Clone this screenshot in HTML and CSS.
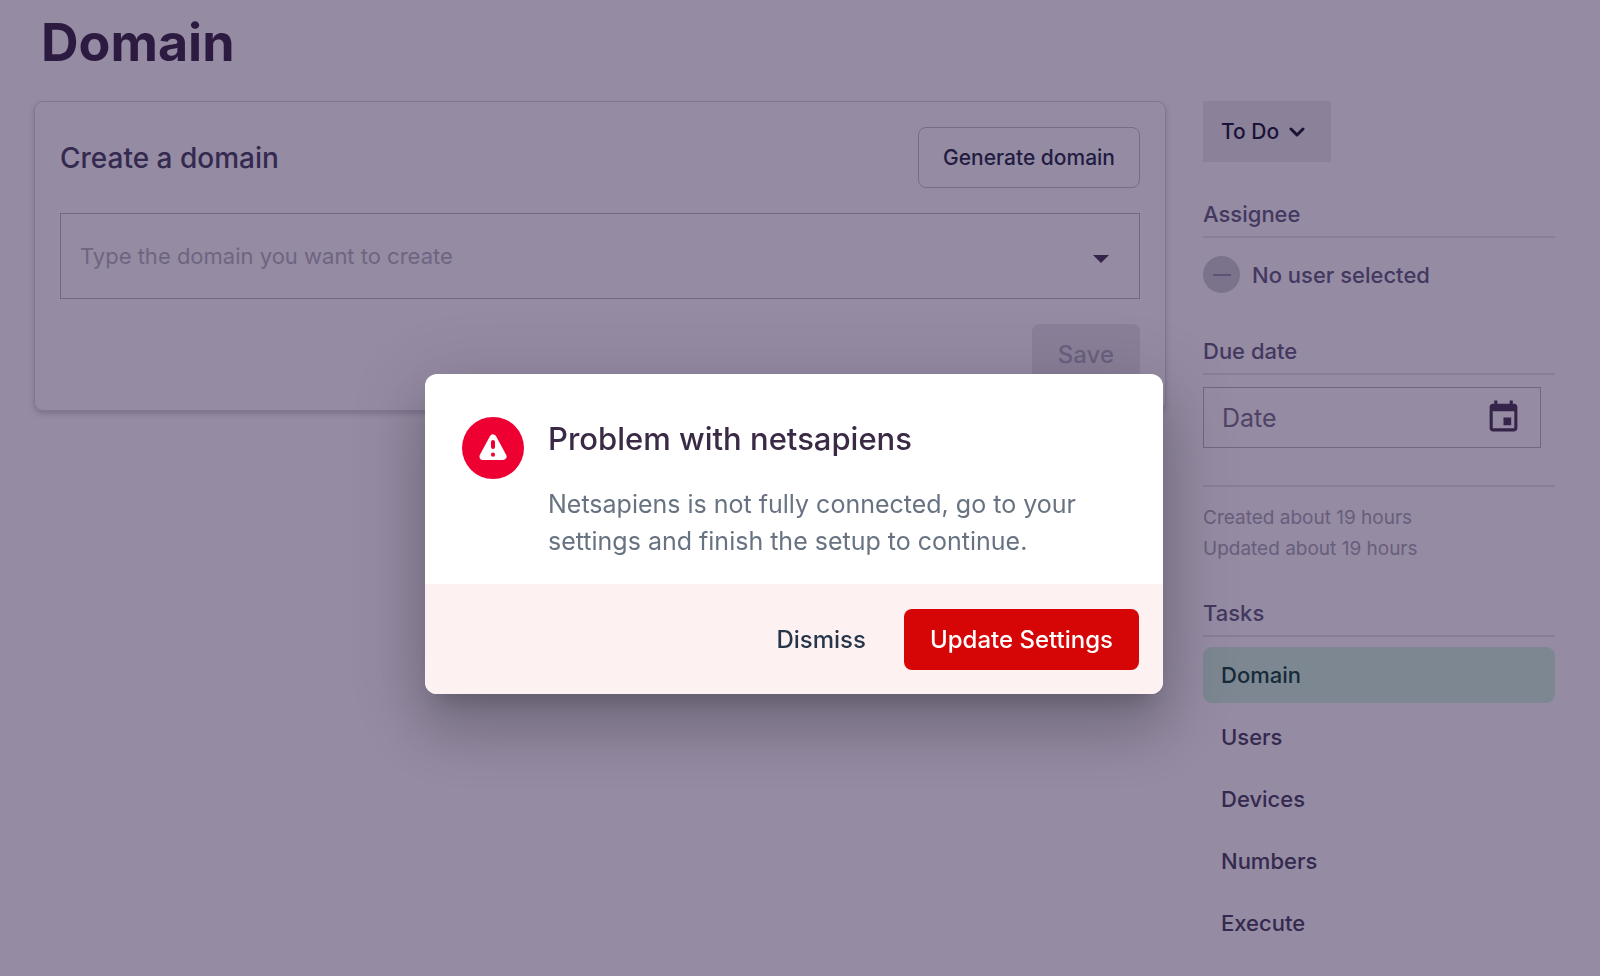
FILE: index.html
```html
<!DOCTYPE html>
<html lang="en">
<head>
<meta charset="utf-8">
<title>Domain</title>
<meta name="viewport" content="width=device-width, initial-scale=1">
<link rel="stylesheet" href="styles.css">
</head>
<body>
<div class="page">
  <h1 class="page-title">Domain</h1>
  <div class="columns">
    <main class="card">
      <div class="card-head">
        <h2 class="card-title"><label for="domain">Create a domain</label></h2>
        <button class="btn btn-outline" type="button">Generate domain</button>
      </div>
      <div class="combo">
        <input class="combo-input" id="domain" type="text" placeholder="Type the domain you want to create">
        <button class="icon-btn" type="button" aria-label="Show domains">
          <svg width="16" height="8" viewBox="0 0 16 8" aria-hidden="true"><path d="M0 0h16L8 8z" fill="currentColor"/></svg>
        </button>
      </div>
      <div class="card-foot">
        <button class="btn btn-save" type="button" disabled>Save</button>
      </div>
    </main>

    <aside class="sidebar">
      <div class="status">
        <select class="status-select" aria-label="Status"><option>To Do</option></select>
        <svg class="status-arrow" width="16" height="10" viewBox="0 0 16 10" fill="none" stroke="currentColor" stroke-width="3" stroke-linecap="round" stroke-linejoin="round" aria-hidden="true"><path d="M2 2l6 6 6-6"/></svg>
      </div>

      <section class="group">
        <h3 class="group-title">Assignee</h3>
        <div class="assignee">
          <span class="avatar"><svg width="18" height="2" viewBox="0 0 18 2" aria-hidden="true"><path d="M0 0h18v2H0z" fill="currentColor"/></svg></span>
          <span>No user selected</span>
        </div>
      </section>

      <section class="group">
        <h3 class="group-title"><label for="due">Due date</label></h3>
        <div class="date">
          <input class="date-input" id="due" type="text" placeholder="Date">
          <button class="icon-btn" type="button" aria-label="Choose date">
            <svg width="37" height="37" viewBox="0 0 24 24" aria-hidden="true"><path d="M17 12h-5v5h5v-5zM16 1v2H8V1H6v2H5c-1.110 0-1.990.9-1.990 2L3 19c0 1.100.890 2 2 2h14c1.100 0 2-.9 2-2V5c0-1.100-.9-2-2-2h-1V1h-2zm3 18H5V8h14v11z" fill="currentColor"/></svg>
          </button>
        </div>
      </section>

      <div class="meta">
        <p class="meta-line">Created about 19 hours</p>
        <p class="meta-line">Updated about 19 hours</p>
      </div>

      <nav class="group" aria-labelledby="tasks">
        <h3 class="group-title" id="tasks">Tasks</h3>
        <ul class="tasks">
          <li><a class="task task-active" href="#domain" aria-current="page">Domain</a></li>
          <li><a class="task" href="#users">Users</a></li>
          <li><a class="task" href="#devices">Devices</a></li>
          <li><a class="task" href="#numbers">Numbers</a></li>
          <li><a class="task" href="#execute">Execute</a></li>
        </ul>
      </nav>
    </aside>
  </div>
</div>

<div class="overlay">
  <div class="dialog" role="alertdialog" aria-modal="true" aria-labelledby="dialog-title" aria-describedby="dialog-text">
    <div class="dialog-body">
      <span class="dialog-icon">
        <svg width="30" height="28" viewBox="0 0 30 28" aria-hidden="true">
          <path d="M15 4L25 22.500H5z" fill="#fff" stroke="#fff" stroke-width="7" stroke-linejoin="round"/>
          <path d="M15 8v5M15 20.600v.1" stroke="#ee0033" stroke-width="4" stroke-linecap="round"/>
        </svg>
      </span>
      <div class="dialog-copy">
        <h2 class="dialog-title" id="dialog-title">Problem with netsapiens</h2>
        <p class="dialog-text" id="dialog-text">Netsapiens is not fully connected, go to your settings and finish the setup to continue.</p>
      </div>
    </div>
    <div class="dialog-actions">
      <button class="btn btn-plain" type="button">Dismiss</button>
      <button class="btn btn-danger" type="button">Update Settings</button>
    </div>
  </div>
</div>
</body>
</html>
```
FILE: styles.css
```css
* { box-sizing: border-box; }

body {
  margin: 0;
  background: #958ba3;
  color: #34294f;
  font-family: Inter, "Liberation Sans", sans-serif;
  font-size: 22px;
  line-height: 32px;
}

h1, h2, h3, p, ul { margin: 0; padding: 0; }
ul { list-style: none; }
button, input, select { font: inherit; color: inherit; }
button { cursor: pointer; }

.page { padding: 11px 45px 24px 34px; }

.page-title {
  padding-left: 7px;
  margin-bottom: 26px;
  color: #2c1a40;
  font-size: 52px;
  font-weight: 700;
  line-height: 64px;
}

.columns {
  display: grid;
  grid-template-columns: minmax(0, 1fr) 352px;
  gap: 37px;
  align-items: start;
}

.card {
  display: flex;
  flex-direction: column;
  gap: 25px;
  padding: 25px;
  border: 1px solid #81778f;
  border-radius: 9px;
  box-shadow: 0 3px 5px rgba(60, 45, 80, .25);
}

.card-head { display: flex; align-items: center; justify-content: space-between; }
.card-title { color: #34294f; font-size: 28px; font-weight: 500; }
.card-foot { display: flex; justify-content: flex-end; }

.btn {
  height: 61px;
  padding: 0 26px;
  border: 0;
  border-radius: 8px;
  background: transparent;
  font-size: 24px;
  font-weight: 500;
}
.btn-outline { padding: 0 24px; border: 1px solid #766d88; color: #221c42; font-size: 21px; }
.btn-save { background: #8a8099; color: #6b6080; }
.btn-plain { color: #25364a; }
.btn-danger { background: #d60606; color: #fff; }

.combo {
  display: flex;
  align-items: center;
  height: 86px;
  padding: 0 30px 0 19px;
  border: 1px solid #71687f;
}
.combo-input, .date-input {
  flex: 1;
  min-width: 0;
  padding: 0;
  border: 0;
  outline: 0;
  background: transparent;
}
.combo-input::placeholder { color: #6f6581; opacity: 1; }

.icon-btn {
  display: flex;
  padding: 0;
  border: 0;
  background: transparent;
  color: #35244a;
}
.combo .icon-btn { padding-top: 6px; }

.status { display: inline-grid; align-items: center; color: #1b1238; margin-bottom: 36px; }
.status-select, .status-arrow { grid-area: 1 / 1; }
.status-select {
  width: 128px;
  height: 61px;
  padding: 0 18px;
  border: 0;
  border-radius: 0;
  background: #8b829a;
  font-size: 21px;
  font-weight: 500;
  appearance: none;
}
.status-arrow { justify-self: end; margin-right: 26px; pointer-events: none; }

.sidebar { display: flex; flex-direction: column; align-items: stretch; }
.status { align-self: flex-start; }

.group-title {
  padding-bottom: 6px;
  border-bottom: 2px solid #887e98;
  color: #43385f;
  font-size: 22px;
  font-weight: 500;
}
.assignee {
  display: flex;
  align-items: center;
  gap: 12px;
  margin: 18px 0 42px;
  color: #43385f;
  font-weight: 500;
}
.avatar {
  display: grid;
  place-items: center;
  width: 37px;
  height: 37px;
  border-radius: 50%;
  background: #7b738c;
  color: #5d5375;
}

.date {
  display: flex;
  align-items: center;
  height: 61px;
  margin: 12px 14px 37px 0;
  padding: 0 18px;
  border: 1px solid #71687f;
  font-size: 25px;
}
.date-input::placeholder { color: #4f4366; opacity: 1; }

.meta { padding: 15px 0 33px; border-top: 2px solid #887e98; color: #685e7c; font-size: 19px; }
.meta-line { line-height: 31px; }

.tasks { display: flex; flex-direction: column; gap: 6px; margin-top: 10px; }
.task {
  display: block;
  padding: 12px 18px;
  border-radius: 9px;
  color: #34294f;
  font-weight: 500;
  text-decoration: none;
}
.task-active { background: #7c8791; color: #162a3a; }

.overlay {
  position: fixed;
  inset: 0;
  display: flex;
  align-items: center;
  justify-content: center;
  padding: 92px 12px 0 0;
}
.dialog {
  width: 738px;
  max-width: 100%;
  overflow: hidden;
  border-radius: 12px;
  background: #fff;
  box-shadow:
    0 17px 23px -11px rgba(0, 0, 0, .2),
    0 37px 58px 5px rgba(0, 0, 0, .14),
    0 14px 71px 12px rgba(0, 0, 0, .12);
}
.dialog-body { display: flex; gap: 24px; padding: 43px 37px 24px; }
.dialog-icon {
  display: grid;
  flex: none;
  place-items: center;
  width: 62px;
  height: 62px;
  border-radius: 50%;
  background: #ee0033;
}
.dialog-title {
  margin-bottom: 25px;
  color: #3a2a45;
  font-size: 31px;
  font-weight: 500;
  line-height: 44px;
}
.dialog-text { color: #687382; font-size: 25px; line-height: 37px; }
.dialog-actions {
  display: flex;
  justify-content: flex-end;
  gap: 12px;
  padding: 25px 24px 24px;
  background: #fef1f1;
}
```
